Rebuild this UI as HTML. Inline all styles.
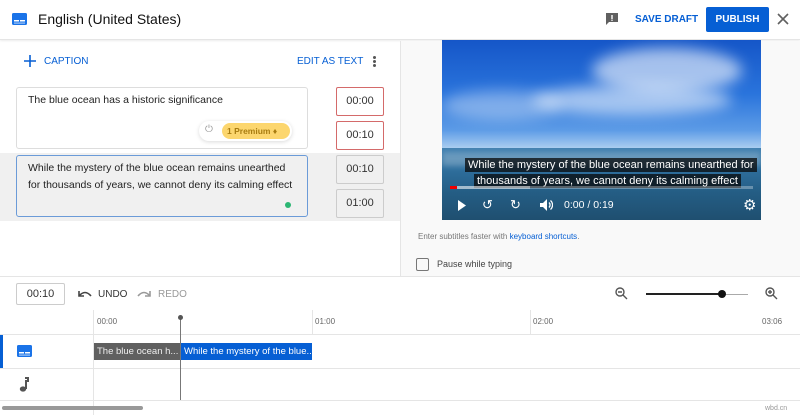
<!DOCTYPE html>
<html><head><style>
*{box-sizing:border-box;margin:0;padding:0}
body{width:800px;height:415px;overflow:hidden;font-family:"Liberation Sans",Arial,sans-serif;background:#fff;position:relative;color:#0d0d0d}
.a{position:absolute}
.blue{color:#065fd4}
.tb{border:1px solid #ccc;border-radius:2px;font-size:11px;text-align:center;line-height:27px;width:48px;height:29px;color:#333}
</style></head><body>
<div class="a" style="left:0;top:0;width:800px;height:40px;border-bottom:1px solid #e5e5e5;box-shadow:0 1px 2px rgba(0,0,0,.08)"></div>
<svg class="a" style="left:12px;top:12px" width="16" height="14" viewBox="0 0 16 14"><rect x="0" y="1" width="15" height="12" rx="1.5" fill="#1a73e8"/><rect x="2" y="8" width="5" height="1.5" fill="#fff"/><rect x="8" y="8" width="5" height="1.5" fill="#fff"/><rect x="2" y="10.5" width="11" height="1.2" fill="#fff" opacity=".6"/></svg>
<div class="a" style="left:38px;top:11px;font-size:14px;color:#111">English (United States)</div>
<svg class="a" style="left:605px;top:12px" width="14" height="14" viewBox="0 0 14 14"><path d="M1 1h12v9H4l-3 3z" fill="#606060"/><rect x="6.3" y="3" width="1.4" height="4" fill="#fff"/><rect x="6.3" y="7.6" width="1.4" height="1.3" fill="#fff"/></svg>
<div class="a blue" style="left:635px;top:14px;font-size:10px;font-weight:bold">SAVE DRAFT</div>
<div class="a" style="left:706px;top:7px;width:63px;height:25px;background:#065fd4;color:#fff;font-size:10px;font-weight:bold;text-align:center;line-height:25px;border-radius:2px">PUBLISH</div>
<svg class="a" style="left:777px;top:13px" width="12" height="12" viewBox="0 0 12 12"><path d="M1 1L11 11M11 1L1 11" stroke="#606060" stroke-width="1.6"/></svg>
<div class="a" style="left:400px;top:41px;width:400px;height:235px;background:#f9f9f9;border-left:1px solid #e5e5e5"></div>
<svg class="a" style="left:24px;top:55px" width="12" height="12" viewBox="0 0 12 12"><path d="M6 0V12M0 6H12" stroke="#065fd4" stroke-width="1.6"/></svg>
<div class="a blue" style="left:44px;top:56px;font-size:10px">CAPTION</div>
<div class="a blue" style="left:297px;top:56px;font-size:10px">EDIT AS TEXT</div>
<div class="a" style="left:373px;top:56px;width:3px;height:3px;border-radius:2px;background:#555;box-shadow:0 4px 0 #555,0 8px 0 #555"></div>
<div class="a" style="left:16px;top:87px;width:292px;height:62px;border:1px solid #ddd;border-radius:3px"></div>
<div class="a" style="left:28px;top:94px;font-size:10.5px;color:#222">The blue ocean has a historic significance</div>
<div class="a" style="left:199px;top:121px;width:93px;height:20px;background:#fff;border-radius:10px;box-shadow:0 1px 4px rgba(0,0,0,.15)"></div>
<div class="a" style="left:205px;top:124px;font-size:10px;color:#999">⏻</div>
<div class="a" style="left:222px;top:123px;width:68px;height:16px;background:#fcd66e;border-radius:8px;font-size:8.5px;font-weight:bold;color:#a87c10;line-height:16px;padding-left:5px">1 Premium ♦</div>
<div class="a tb" style="left:336px;top:87px;border-color:#d46a6a">00:00</div>
<div class="a tb" style="left:336px;top:121px;border-color:#d46a6a">00:10</div>
<div class="a" style="left:0;top:153px;width:400px;height:68px;background:#f0f0f0"></div>
<div class="a" style="left:16px;top:155px;width:292px;height:62px;border:1px solid #6b9bd8;border-radius:3px"></div>
<div class="a" style="left:28px;top:160px;font-size:10.5px;color:#222;line-height:17px">While the mystery of the blue ocean remains unearthed<br>for thousands of years, we cannot deny its calming effect</div>
<div class="a" style="left:285px;top:202px;width:6px;height:6px;border-radius:3px;background:#2bb673"></div>
<div class="a tb" style="left:336px;top:155px;background:#f0f0f0">00:10</div>
<div class="a tb" style="left:336px;top:189px;background:#f0f0f0">01:00</div>
<div class="a" style="left:442px;top:40px;width:319px;height:180px;overflow:hidden;background:linear-gradient(#1556c8 0%,#2a74dc 30%,#5c9be6 50%,#a9cdf0 60%,#c8e0f5 59.5%,#3f7fb0 60%,#2e6e9c 72%,#245d84 85%,#1f4f70 100%)">
 <div class="a" style="left:150px;top:8px;width:150px;height:45px;background:rgba(255,255,255,.6);border-radius:50%;filter:blur(7px)"></div>
 <div class="a" style="left:90px;top:45px;width:200px;height:30px;background:rgba(255,255,255,.55);border-radius:50%;filter:blur(7px)"></div>
 <div class="a" style="left:0;top:50px;width:120px;height:30px;background:rgba(255,255,255,.35);border-radius:50%;filter:blur(7px)"></div>
 <div class="a" style="left:0;top:112px;width:319px;height:14px;background:rgba(255,255,255,.25);filter:blur(3px)"></div>
</div>
<div class="a" style="left:465px;top:158px;background:rgba(8,8,8,.75);color:#fff;font-size:11px;padding:1px 3px">While the mystery of the blue ocean remains unearthed for</div>
<div class="a" style="left:474px;top:174px;background:rgba(8,8,8,.75);color:#fff;font-size:11px;padding:1px 3px">thousands of years, we cannot deny its calming effect</div>
<div class="a" style="left:450px;top:186px;width:303px;height:3px;background:rgba(255,255,255,.3)"></div>
<div class="a" style="left:450px;top:186px;width:80px;height:3px;background:rgba(255,255,255,.4)"></div>
<div class="a" style="left:450px;top:186px;width:7px;height:3px;background:#e00"></div>
<svg class="a" style="left:457px;top:200px" width="10" height="11" viewBox="0 0 10 11"><path d="M1 0L9 5.5L1 11z" fill="#fff"/></svg>
<div class="a" style="left:482px;top:197px;color:#fff;font-size:13px">↺</div>
<div class="a" style="left:510px;top:197px;color:#fff;font-size:13px">↻</div>
<svg class="a" style="left:540px;top:199px" width="13" height="12" viewBox="0 0 13 12"><path d="M0 4h3l4-4v12L3 8H0z" fill="#fff"/><path d="M9 3.5a3.5 3.5 0 0 1 0 5M10.5 1.5a6 6 0 0 1 0 9" stroke="#fff" stroke-width="1.3" fill="none"/></svg>
<div class="a" style="left:564px;top:199px;color:#fff;font-size:10.5px">0:00 / 0:19</div>
<div class="a" style="left:743px;top:196px;color:#fff;font-size:15px">⚙</div>
<div class="a" style="left:418px;top:232px;font-size:8px;color:#777">Enter subtitles faster with <span class="blue">keyboard shortcuts</span>.</div>
<div class="a" style="left:416px;top:258px;width:13px;height:13px;border:1.5px solid #777;border-radius:2px"></div>
<div class="a" style="left:437px;top:259px;font-size:9px;color:#444">Pause while typing</div>
<div class="a" style="left:0;top:276px;width:800px;height:1px;background:#e5e5e5"></div>
<div class="a tb" style="left:16px;top:283px;height:22px;line-height:20px;width:49px">00:10</div>
<svg class="a" style="left:77px;top:289px" width="15" height="10" viewBox="0 0 15 10"><path d="M2 2v5h5" stroke="#444" stroke-width="1.6" fill="none"/><path d="M2 7Q8 0 14 7" stroke="#444" stroke-width="1.6" fill="none"/></svg>
<div class="a" style="left:98px;top:289px;font-size:10px;color:#333">UNDO</div>
<svg class="a" style="left:137px;top:289px" width="15" height="10" viewBox="0 0 15 10"><path d="M13 2v5H8" stroke="#999" stroke-width="1.6" fill="none"/><path d="M13 7Q7 0 1 7" stroke="#999" stroke-width="1.6" fill="none"/></svg>
<div class="a" style="left:158px;top:289px;font-size:10px;color:#999">REDO</div>
<svg class="a" style="left:615px;top:287px" width="13" height="13" viewBox="0 0 13 13"><circle cx="5" cy="5" r="4" stroke="#555" stroke-width="1.4" fill="none"/><path d="M3 5h4M8 8l4 4" stroke="#555" stroke-width="1.4"/></svg>
<div class="a" style="left:646px;top:293px;width:76px;height:2px;background:#222"></div>
<div class="a" style="left:722px;top:293.5px;width:26px;height:1px;background:#aaa"></div>
<div class="a" style="left:718px;top:290px;width:8px;height:8px;border-radius:4px;background:#111"></div>
<svg class="a" style="left:765px;top:287px" width="13" height="13" viewBox="0 0 13 13"><circle cx="5" cy="5" r="4" stroke="#555" stroke-width="1.4" fill="none"/><path d="M3 5h4M5 3v4M8 8l4 4" stroke="#555" stroke-width="1.4"/></svg>
<div class="a" style="left:93px;top:310px;width:1px;height:105px;background:#e5e5e5"></div>
<div class="a" style="left:97px;top:317px;font-size:8px;color:#666">00:00</div>
<div class="a" style="left:312px;top:310px;width:1px;height:24px;background:#e5e5e5"></div>
<div class="a" style="left:315px;top:317px;font-size:8px;color:#666">01:00</div>
<div class="a" style="left:530px;top:310px;width:1px;height:24px;background:#e5e5e5"></div>
<div class="a" style="left:533px;top:317px;font-size:8px;color:#666">02:00</div>
<div class="a" style="left:762px;top:317px;font-size:8px;color:#666">03:06</div>
<div class="a" style="left:0;top:334px;width:800px;height:1px;background:#e5e5e5"></div>
<div class="a" style="left:0;top:368px;width:800px;height:1px;background:#e5e5e5"></div>
<div class="a" style="left:0;top:400px;width:800px;height:1px;background:#e5e5e5"></div>
<div class="a" style="left:0;top:335px;width:3px;height:33px;background:#065fd4"></div>
<svg class="a" style="left:17px;top:344px" width="16" height="14" viewBox="0 0 16 14"><rect x="0" y="1" width="15" height="12" rx="1.5" fill="#1a73e8"/><rect x="2" y="8" width="5" height="1.5" fill="#fff"/><rect x="8" y="8" width="5" height="1.5" fill="#fff"/><rect x="2" y="10.5" width="11" height="1.2" fill="#fff" opacity=".6"/></svg>
<svg class="a" style="left:19px;top:377px" width="10" height="15" viewBox="0 0 10 15"><path d="M6 1h3v3H7v8" stroke="#555" stroke-width="2" fill="none"/><ellipse cx="4" cy="12" rx="3.2" ry="2.6" fill="#555"/></svg>
<div class="a" style="left:94px;top:343px;width:86px;height:17px;background:#606060;color:#eee;font-size:9.5px;line-height:17px;padding-left:3px;white-space:nowrap;overflow:hidden">The blue ocean h...</div>
<div class="a" style="left:181px;top:343px;width:131px;height:17px;background:#065fd4;color:#fff;font-size:9.5px;line-height:17px;padding-left:3px;white-space:nowrap;overflow:hidden">While the mystery of the blue...</div>
<div class="a" style="left:180px;top:318px;width:1px;height:82px;background:#777"></div>
<div class="a" style="left:178px;top:315px;width:5px;height:5px;border-radius:3px;background:#555"></div>
<div class="a" style="left:2px;top:406px;width:141px;height:4px;background:#999;border-radius:2px"></div>
<div class="a" style="left:765px;top:405px;font-size:7px;color:#999">wbd.cn</div>
</body></html>
